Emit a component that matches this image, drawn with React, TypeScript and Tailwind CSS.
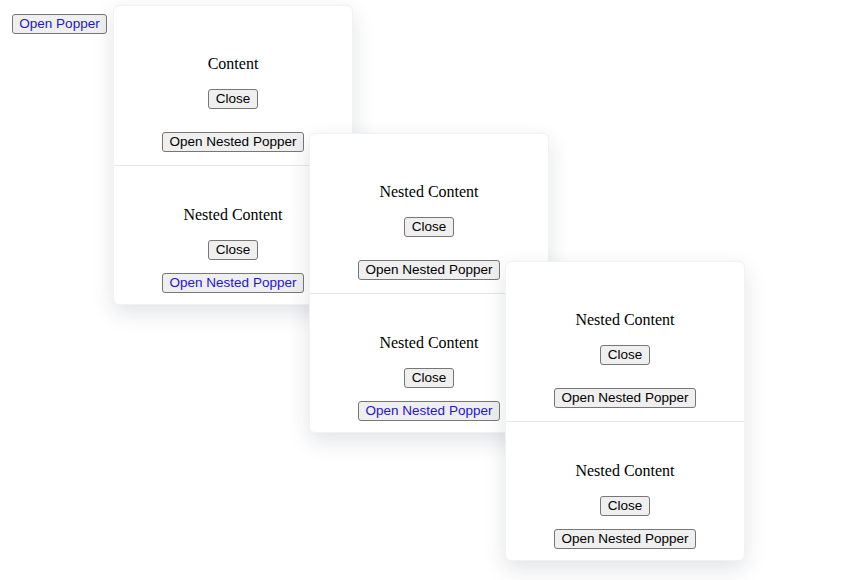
import React from 'react';

const btn =
  "block h-[20px] bg-[#efefef] border border-[#767676] rounded-[3px] text-[13.5px] leading-[18px] font-['Liberation_Sans',Arial,sans-serif] text-center px-0";

const Btn = ({ label, w, active }: { label: string; w: string; active?: boolean }) => (
  <button className={`${btn} ${w} ${active ? 'text-[#2314d6]' : 'text-black'}`}>{label}</button>
);

const Popper = ({
  pos,
  title,
  nestedActive,
}: {
  pos: string;
  title: string;
  nestedActive: boolean;
}) => (
  <div
    className={`absolute ${pos} w-[240px] h-[300px] bg-white rounded-[6px] border border-[#f1f2f4] shadow-[0_8px_22px_rgba(30,41,59,0.13)] flex flex-col`}
  >
    <div className="h-[159px] flex flex-col items-center pt-[49px]">
      <p className="h-[18px] leading-[18px] text-[16px]">{title}</p>
      <div className="mt-[16px]">
        <Btn label="Close" w="w-[50px]" />
      </div>
      <div className="mt-[23px]">
        <Btn label="Open Nested Popper" w="w-[142px]" />
      </div>
    </div>
    <div className="h-px bg-[#e4e6ea]" />
    <div className="flex-1 flex flex-col items-center pt-[40px]">
      <p className="h-[18px] leading-[18px] text-[16px]">Nested Content</p>
      <div className="mt-[16px]">
        <Btn label="Close" w="w-[50px]" />
      </div>
      <div className="mt-[13px]">
        <Btn label="Open Nested Popper" w="w-[142px]" active={nestedActive} />
      </div>
    </div>
  </div>
);

export default function App() {
  return (
    <div className="relative w-[845px] h-[580px] bg-white font-['Liberation_Serif','Times_New_Roman',serif] text-black overflow-hidden">
      <div className="pt-[14px] pl-[12px]">
        <Btn label="Open Popper" w="w-[95px]" active />
      </div>
      <Popper pos="left-[113px] top-[5px]" title="Content" nestedActive />
      <Popper pos="left-[309px] top-[133px]" title="Nested Content" nestedActive />
      <Popper pos="left-[505px] top-[261px]" title="Nested Content" nestedActive={false} />
    </div>
  );
}
